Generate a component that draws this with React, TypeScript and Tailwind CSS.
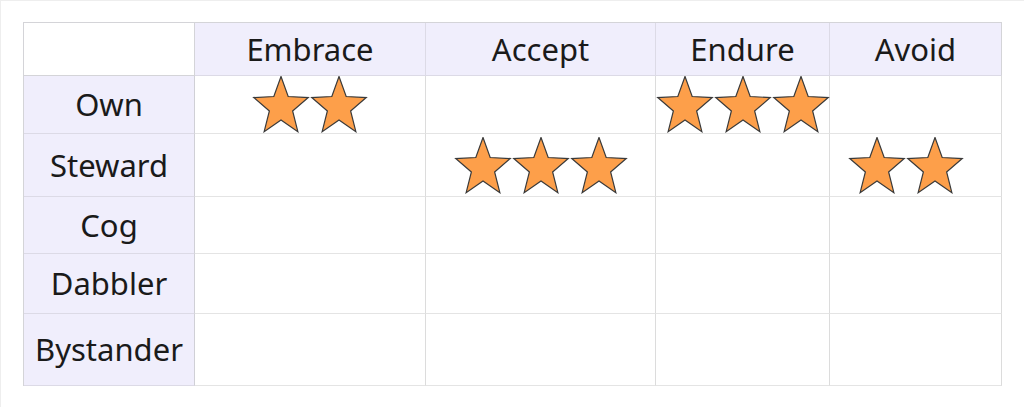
const cols = ["Embrace", "Accept", "Endure", "Avoid"];
const rows = ["Own", "Steward", "Cog", "Dabbler", "Bystander"];

// stars per [row][col]
const ratings: Record<string, number[]> = {
  Own: [2, 0, 3, 0],
  Steward: [0, 3, 0, 2],
};

const rowHeights = ["h-[58px]", "h-[63px]", "h-[57px]", "h-[60px]", "h-[72px]"];
const colWidths = ["w-[231px]", "w-[230px]", "w-[174px]", "w-[172px]"];

function starPoints() {
  const cx = 29;
  const cy = 31;
  const R = 30.5;
  const r = 13;
  const sx = 0.94;
  const pts: string[] = [];
  for (let i = 0; i < 10; i++) {
    const a = (Math.PI / 5) * i;
    const rad = i % 2 === 0 ? R : r;
    pts.push(`${(cx + rad * Math.sin(a) * sx).toFixed(2)},${(cy - rad * Math.cos(a)).toFixed(2)}`);
  }
  return pts.join(" ");
}

const STAR = starPoints();

function Star() {
  return (
    <svg width="58" height="57" viewBox="0 0 58 57" className="block shrink-0">
      <polygon points={STAR} fill="#fd9f4a" stroke="#3a3a3a" strokeWidth="1.2" strokeLinejoin="miter" />
    </svg>
  );
}

export default function App() {
  return (
    <div
      className="h-[407px] w-[1024px] border-l border-t border-[#eeeeee] bg-white pl-[22px] pt-[21px] text-[31px] leading-none text-[#1a1a1a]"
      style={{ fontFamily: '"Noto Sans", "Open Sans", sans-serif' }}
    >
      <div className="inline-flex flex-col border-l border-t border-[#d4d4d8]">
        <div className="flex h-[53px]">
          <div className="w-[171px] border-r border-b border-[#d4d4d8] bg-white" />
          {cols.map((c, i) => (
            <div
              key={c}
              className={`${colWidths[i]} flex items-center justify-center border-r border-b border-[#dcdae6] bg-[#f0eefc] ${i === 3 ? "border-r-[#d4d4d8]" : ""}`}
            >
              {c}
            </div>
          ))}
        </div>
        {rows.map((r, ri) => (
          <div key={r} className={`flex ${rowHeights[ri]}`}>
            <div className="flex w-[171px] items-center justify-center border-r border-b border-r-[#d0d0d6] border-b-[#dcdae6] bg-[#f0eefc]">
              {r}
            </div>
            {cols.map((c, ci) => {
              const n = ratings[r]?.[ci] ?? 0;
              return (
                <div
                  key={c}
                  className={`${colWidths[ci]} flex items-center justify-center border-r border-b border-r-[#dcdcdc] border-b-[#e4e4e4] bg-white ${ci === 3 ? "border-r-[#d4d4d8] pr-[20px]" : ""} ${ri === 4 ? "border-b-[#d4d4d8]" : ""}`}
                >
                  {Array.from({ length: n }).map((_, k) => (
                    <Star key={k} />
                  ))}
                </div>
              );
            })}
          </div>
        ))}
      </div>
    </div>
  );
}
